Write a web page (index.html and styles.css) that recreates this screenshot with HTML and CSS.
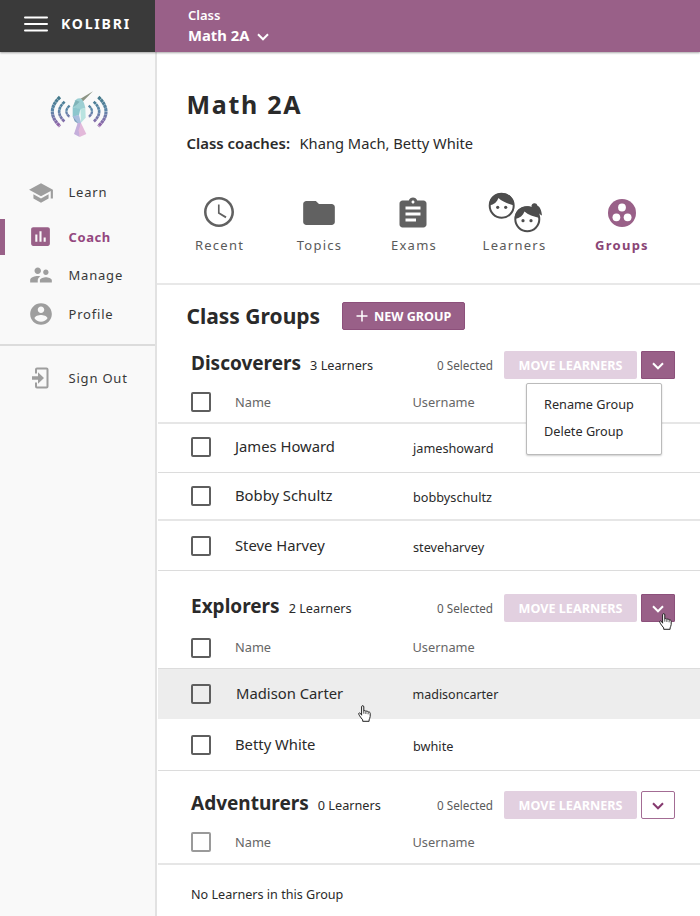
FILE: index.html
```html
<!DOCTYPE html>
<html lang="en">
<head>
<meta charset="utf-8">
<title>Kolibri – Math 2A</title>
<link rel="stylesheet" href="styles.css">
</head>
<body>
<svg class="defs" width="0" height="0" aria-hidden="true">
  <symbol id="hand" viewBox="0 0 13 17">
    <path d="M3.6 10.2V1.9C3.6.2 5.8.2 5.8 1.9V6C6.2 5.3 7.8 5.4 7.9 6.5 8.4 5.7 10 6 10.1 7.2 10.7 6.6 12.2 7 12.2 8.3V11.4C12.2 13 11.3 13.8 11.1 14.9V16.3H4.7V14.9C3.8 13.6 2.5 12.3 1.6 10.8.9 9.6.2 8.4 1.1 8 2.1 7.5 2.8 8.8 3.6 10.2Z" fill="#fff" stroke="#222" stroke-width="1" stroke-linejoin="round"/>
    <path d="M5.8 6V8.7M7.9 6.6V9M10.1 7.4V9.3" fill="none" stroke="#222" stroke-width=".8"/>
  </symbol>
  <symbol id="caret" viewBox="0 0 12 8"><path d="M1 1.3 6 6.3 11 1.3" fill="none" stroke="currentColor" stroke-width="2"/></symbol>
</svg>

<header class="topbar">
  <div class="brand">
    <svg class="menu" viewBox="0 0 24 16"><path d="M1 1.6H23M1 8H23M1 14.4H23" stroke="#fff" stroke-width="2" stroke-linecap="round"/></svg>
    <span>KOLIBRI</span>
  </div>
  <div class="class-picker">
    <div class="picker-label">Class</div>
    <div class="picker-value">Math 2A<svg class="picker-caret" viewBox="0 0 12 8"><use href="#caret"/></svg></div>
  </div>
</header>

<div class="layout">
  <nav class="sidebar">
    <svg class="logo" viewBox="0 0 210 180">
      <defs>
        <linearGradient id="wave" x1="0" y1="37" x2="0" y2="124" gradientUnits="userSpaceOnUse">
          <stop offset="0" stop-color="#44798a"/><stop offset=".45" stop-color="#5b86a8"/><stop offset="1" stop-color="#9563aa"/>
        </linearGradient>
      </defs>
      <g fill="none" stroke="url(#wave)" stroke-dasharray="9 1">
        <path stroke-width="9.5" d="M45 36Q-1 80 45 124M160 36Q206 80 160 124"/>
        <path stroke-width="8" d="M59 50Q26 80 59 110M146 50Q179 80 146 110"/>
        <path stroke-width="7" d="M74 62Q54 79 74 96M131 62Q151 79 131 96"/>
      </g>
      <path fill="#8c9484" d="M144 19 104 43 112 51Z"/>
      <path fill="#9ccfd3" d="M91 46Q100 36 111 43L117 54 121 68 106 74 83 66Z"/>
      <path fill="#7fb3b8" d="M92 46 84 66 94 60 104 50Z"/>
      <path fill="#b9e3e0" d="M106 72 121 68 122 98 108 113Z"/>
      <path fill="#8cc6cd" d="M83 66 106 72 102 91 83 95Z"/>
      <path fill="#a9bede" d="M83 94 102 90 108 113 100 117Z"/>
      <path fill="#789cba" d="M83 93 101 117 89 109Z"/>
      <path fill="#c5afdb" d="M98 114 108 114 104 156 87 147Z"/>
      <path fill="#e3b9da" d="M108 114 124 147 104 156 101 136Z"/>
    </svg>
    <a class="nav-item nav-learn"><svg viewBox="0 0 24 24"><path d="M5 13.18v4L12 21l7-3.82v-4L12 17l-7-3.82zM12 3 1 9l11 6 9-4.91V17h2V9L12 3z"/></svg><span>Learn</span></a>
    <a class="nav-item nav-coach"><svg viewBox="0 0 24 24"><path d="M19 3H5c-1.100 0-2 .9-2 2v14c0 1.100.9 2 2 2h14c1.100 0 2-.9 2-2V5c0-1.100-.9-2-2-2zM9 17H7v-7h2v7zm4 0h-2V7h2v10zm4 0h-2v-4h2v4z"/></svg><span>Coach</span></a>
    <a class="nav-item nav-manage"><svg viewBox="0 0 24 24"><path d="M16.500 12c1.380 0 2.490-1.120 2.490-2.500S17.880 7 16.500 7C15.120 7 14 8.120 14 9.500s1.120 2.500 2.500 2.500zM9 11c1.660 0 2.990-1.340 2.990-3S10.660 5 9 5C7.340 5 6 6.340 6 8s1.340 3 3 3zm7.500 3c-1.830 0-5.500.92-5.500 2.750V19h11v-2.250c0-1.830-3.670-2.750-5.500-2.750zM9 13c-2.330 0-7 1.170-7 3.500V19h7v-2.250c0-.85.33-2.340 2.370-3.470C10.500 13.100 9.660 13 9 13z"/></svg><span>Manage</span></a>
    <a class="nav-item nav-profile"><svg viewBox="0 0 24 24"><path d="M12 2C6.480 2 2 6.480 2 12s4.480 10 10 10 10-4.480 10-10S17.520 2 12 2zm0 3c1.660 0 3 1.340 3 3s-1.340 3-3 3-3-1.340-3-3 1.340-3 3-3zm0 14.200c-2.500 0-4.710-1.280-6-3.220.03-1.990 4-3.080 6-3.080 1.990 0 5.970 1.090 6 3.080-1.290 1.940-3.500 3.220-6 3.220z"/></svg><span>Profile</span></a>
    <a class="nav-item nav-signout"><svg viewBox="0 0 26 26"><path d="M8 8.500V4.500Q8 3.500 9 3.500H18.500Q19.500 3.500 19.500 4.500V21.500Q19.500 22.500 18.500 22.500H9Q8 22.500 8 21.500V17.500" fill="none" stroke="#9e9e9e" stroke-width="2"/><path d="M4 11.300H10V7.300L16 13 10 18.700V14.700H4Z"/></svg><span>Sign Out</span></a>
  </nav>

  <main class="main">
    <section class="hero">
      <h1>Math 2A</h1>
      <p class="coaches"><b>Class coaches:</b><span>Khang Mach, Betty White</span></p>
      <div class="tabs">
        <a class="tab"><span class="tab-icon"><svg width="36" height="36" viewBox="0 0 24 24"><path d="M11.990 2C6.470 2 2 6.480 2 12s4.470 10 9.990 10C17.520 22 22 17.520 22 12S17.520 2 11.990 2zM12 20.300c-4.600 0-8.300-3.700-8.300-8.300S7.400 3.700 12 3.700s8.300 3.700 8.300 8.300-3.700 8.300-8.300 8.300z"/><path d="M12.400 7H11.300v6l5.050 3.100.65-1.050-4.600-2.700z"/></svg></span>Recent</a>
        <a class="tab"><span class="tab-icon tab-folder"><svg width="38" height="36" viewBox="0 0 24 24" preserveAspectRatio="none"><path d="M10 4H4c-1.100 0-1.990.9-1.990 2L2 18c0 1.100.9 2 2 2h16c1.100 0 2-.9 2-2V8c0-1.100-.9-2-2-2h-8l-2-2z"/></svg></span>Topics</a>
        <a class="tab"><span class="tab-icon tab-exams"><svg width="36" height="36" viewBox="0 0 24 24"><path d="M19 3h-4.180C14.400 1.840 13.300 1 12 1c-1.300 0-2.400.84-2.820 2H5c-1.100 0-2 .9-2 2v14c0 1.100.9 2 2 2h14c1.100 0 2-.9 2-2V5c0-1.100-.9-2-2-2zm-7 0c.55 0 1 .45 1 1s-.45 1-1 1-1-.45-1-1 .45-1 1-1zm2 14H7v-2h7v2zm3-4H7v-2h10v2zm0-4H7V7h10v2z"/></svg></span>Exams</a>
        <a class="tab"><span class="tab-icon"><svg width="56" height="42" viewBox="0 0 56 42">
          <g fill="#fff" stroke="#4d4d4d" stroke-width="2"><circle cx="15.700" cy="14.700" r="12"/><circle cx="41.300" cy="28.300" r="12"/></g>
          <g fill="#4d4d4d"><path d="M3.500 14.500C3 7 8 2 15.700 2 23 2 28.400 7.500 28 14.500 22 12.500 16 10.500 12.500 7 11 11 8 13.500 3.500 14.500Z"/>
          <path d="M29 28C28.500 20 34 15.300 41 15.300 43 15.300 44 15.600 45.500 16 45 13.500 47 12 48.600 12.200 50 12.300 51 13 51.300 14.500 54.500 16 55.500 20 56 24.500 54.500 23.800 53.800 23 53.200 22.500L53.500 27C47.500 25.500 42 24 38.500 20.500 37 24.500 34 27 29 28Z"/>
          <circle cx="11.700" cy="16.300" r="1.600"/><circle cx="19.700" cy="16.300" r="1.600"/><circle cx="37" cy="29.700" r="1.600"/><circle cx="45" cy="29.700" r="1.600"/></g></svg></span>Learners</a>
        <a class="tab tab-active"><span class="tab-icon tab-groups"><svg width="28" height="28" viewBox="0 0 28 28"><circle cx="14" cy="14" r="14"/><g fill="#fff"><circle cx="14" cy="8.500" r="3.900"/><circle cx="8.400" cy="18.300" r="3.900"/><circle cx="19.600" cy="18.300" r="3.900"/></g></svg></span>Groups</a>
      </div>
    </section>

    <div class="groups-title">
      <h2>Class Groups</h2>
      <button class="btn btn-new"><svg viewBox="0 0 12 12"><path d="M6 .5V11.500M.5 6H11.500" stroke="#fff" stroke-width="1.500"/></svg>NEW GROUP</button>
    </div>

    <section class="group">
      <div class="group-head">
        <div class="group-name"><h3>Discoverers</h3><span>3 Learners</span></div>
        <span class="selected">0 Selected</span>
        <button class="btn btn-move">MOVE LEARNERS</button>
        <div class="options">
          <button class="btn btn-caret"><svg viewBox="0 0 12 8"><use href="#caret"/></svg></button>
          <div class="dropdown"><a>Rename Group</a><a>Delete Group</a></div>
        </div>
      </div>
      <div class="row row-head line-2 h-42"><i class="check"></i><span>Name</span><span>Username</span></div>
      <div class="row row-first"><i class="check"></i><span class="name">James Howard</span><span class="user user-low">jameshoward</span></div>
      <div class="row line-2 h-48"><i class="check"></i><span class="name">Bobby Schultz</span><span class="user user-low">bobbyschultz</span></div>
      <div class="row h-50"><i class="check"></i><span class="name">Steve Harvey</span><span class="user user-low">steveharvey</span></div>
    </section>

    <section class="group group-explorers">
      <div class="group-head">
        <div class="group-name"><h3>Explorers</h3><span>2 Learners</span></div>
        <span class="selected">0 Selected</span>
        <button class="btn btn-move">MOVE LEARNERS</button>
        <div class="options">
          <button class="btn btn-caret"><svg viewBox="0 0 12 8"><use href="#caret"/></svg></button>
          <svg class="cursor cursor-button"><use href="#hand"/></svg>
        </div>
      </div>
      <div class="row row-head h-44"><i class="check"></i><span>Name</span><span>Username</span></div>
      <div class="row row-hover"><i class="check"></i><span class="name">Madison Carter</span><span class="user">madisoncarter</span><svg class="cursor cursor-row"><use href="#hand"/></svg></div>
      <div class="row h-52"><i class="check"></i><span class="name">Betty White</span><span class="user user-low">bwhite</span></div>
    </section>

    <section class="group group-adventurers">
      <div class="group-head">
        <div class="group-name"><h3>Adventurers</h3><span>0 Learners</span></div>
        <span class="selected">0 Selected</span>
        <button class="btn btn-move">MOVE LEARNERS</button>
        <div class="options"><button class="btn btn-caret btn-outline"><svg viewBox="0 0 12 8"><use href="#caret"/></svg></button></div>
      </div>
      <div class="row row-head line-2 h-43"><i class="check check-disabled"></i><span>Name</span><span>Username</span></div>
      <p class="empty">No Learners in this Group</p>
    </section>
  </main>
</div>
</body>
</html>
```
FILE: styles.css
```css
:root {
  --purple: #996088;
}

* { box-sizing: border-box; }

body {
  margin: 0;
  height: 916px;
  overflow: hidden;
  background: #fff;
  color: #2a2a2a;
  font-family: "Noto Sans", sans-serif;
  font-size: 13px;
}

h1, h2, h3, p { margin: 0; }
svg { display: block; flex: none; }
.defs { position: absolute; }

/* Top bar */
.topbar {
  position: relative;
  z-index: 1;
  display: flex;
  height: 52px;
  color: #fff;
  box-shadow: 0 1px 2px rgba(0, 0, 0, .35);
}
.brand {
  display: flex;
  align-items: center;
  width: 155px;
  padding: 0 0 4px 24px;
  background: #3a3a3a;
  font-size: 14px;
  font-weight: 700;
  letter-spacing: 1.8px;
}
.brand span { padding-bottom: 1px; }
.menu { width: 24px; height: 16px; margin-right: 13px; }
.class-picker {
  flex: 1;
  padding: 5px 0 0 33px;
  background: var(--purple);
}
.picker-label { font-weight: 600; line-height: 20px; }
.picker-value {
  display: flex;
  align-items: center;
  font-size: 14.800px;
  font-weight: 700;
  line-height: 21px;
}
.picker-caret { width: 12px; height: 8px; margin: 3px 0 0 8px; }

/* Sidebar */
.layout { display: flex; height: 864px; }
.sidebar {
  width: 157px;
  background: #f9f9f9;
  border-right: 2px solid #e2e2e2;
}
.logo { width: 70px; height: 60px; margin: 33px 0 27px 45px; }
.nav-item {
  display: flex;
  align-items: center;
  height: 40px;
  padding-left: 28px;
  letter-spacing: .8px;
  color: #383838;
}
.nav-item span { padding-bottom: 1px; }
.nav-item svg { width: 26px; height: 26px; margin-right: 14.500px; fill: #9e9e9e; }
.nav-learn { height: 41px; }
.nav-coach {
  height: 36px;
  margin-top: 6px;
  padding-left: 23px;
  border-left: 5px solid var(--purple);
  color: #94477f;
  font-weight: 700;
  letter-spacing: .6px;
}
.nav-coach svg { width: 25px; height: 25px; margin: 0 15.500px 2px 0; fill: var(--purple); }
.nav-profile { height: 39px; }
.nav-profile svg { margin-bottom: 1px; }
.nav-signout {
  height: 66px;
  margin-top: 10px;
  border-top: 2px solid #dcdcdc;
}

/* Class header */
.main { flex: 1; padding-left: 1px; }
.hero {
  height: 233px;
  margin-left: -1px;
  padding: 33px 0 0 29.500px;
  border-bottom: 2px solid #e8e8e8;
}
h1 {
  font-size: 25px;
  font-weight: 700;
  letter-spacing: 1.700px;
  line-height: 38px;
}
.coaches {
  display: flex;
  gap: 9.500px;
  padding-top: 9px;
  font-size: 14.700px;
  line-height: 23px;
}
.coaches b { font-size: 14.900px; font-weight: 600; }
.tabs {
  display: grid;
  grid-template-columns: 100px 100px 89px 112px 103px;
  margin: 36px 0 0 -17.500px;
}
.tab {
  display: flex;
  flex-direction: column;
  align-items: center;
  padding-left: 1px;
  color: #5a5a5a;
  letter-spacing: 1.250px;
  line-height: 21px;
}
.tab-icon {
  display: flex;
  align-items: center;
  justify-content: center;
  height: 42px;
  margin: 0 1px 2px 0;
}
.tab svg { fill: #616161; }
.tab-folder { padding-top: 2px; margin-right: 2px; }
.tab-exams { padding-top: 3px; margin-right: 2px; }
.tab-groups { padding-top: 2px; }
.tab-active { color: #8a4576; font-weight: 700; }
.tab-active svg { fill: var(--purple); }

/* Buttons */
.btn {
  display: flex;
  align-items: center;
  justify-content: center;
  height: 28px;
  padding: 0;
  border: 0;
  border-radius: 2px;
  background: var(--purple);
  color: #fff;
  font: 700 12.600px "Noto Sans", sans-serif;
}
.btn-new { width: 123px; margin-left: 22px; border: 1px solid #8c507b; }
.btn-new svg { width: 12px; height: 12px; margin-right: 6px; }
.btn-move { width: 133px; margin-right: 4px; background: #e2d0e0; }
.btn-caret { width: 34px; border: 1px solid #8c507b; border-radius: 1px; }
.btn-caret svg { width: 12px; height: 8px; margin: 2px 1px 0 0; }
.btn-outline { background: #fff; border-color: #a36c94; color: #86396f; border-radius: 2px; }

/* Groups */
.groups-title {
  display: flex;
  align-items: center;
  height: 62px;
  margin-bottom: 1px;
  padding-left: 28.500px;
}
h2 { padding-bottom: 1px; font-size: 21px; font-weight: 700; line-height: 28px; }
.group-explorers { padding-top: 20px; }
.group-adventurers { padding-top: 17px; }
.group-head {
  display: flex;
  align-items: center;
  height: 34px;
  padding: 0 25px 0 33px;
}
.group-name {
  display: flex;
  flex: 1;
  align-items: baseline;
  gap: 9px;
  padding-bottom: 5px;
  font-size: 12.700px;
}
h3 { font-size: 19px; font-weight: 700; line-height: 26px; }
.selected { margin-right: 11px; color: #5a5a5a; font-size: 11.700px; }
.options { position: relative; }
.dropdown {
  position: absolute;
  z-index: 2;
  top: 32px;
  right: 13px;
  width: 136px;
  height: 72px;
  padding: 7px 0 0 17px;
  border: 1px solid #bbb;
  border-radius: 2px;
  background: #fff;
  box-shadow: 0 1px 2px rgba(0, 0, 0, .2);
  font-size: 12.700px;
}
.dropdown a { display: block; line-height: 27px; }

.row {
  position: relative;
  display: grid;
  grid-template-columns: 44px 177.500px 1fr;
  align-items: center;
  height: 49px;
  padding-left: 33px;
  border-bottom: 1px solid #dcdcdc;
}
.line-2 { border-bottom: 2px solid #e6e6e6; }
.h-42 { height: 42px; }
.h-43 { height: 43px; padding-bottom: 1px; }
.h-44 { height: 44px; padding-top: 2px; }
.h-48 { height: 48px; }
.h-50 { height: 50px; }
.h-52 { height: 52px; }
.row-head { color: #666; font-size: 12.800px; }
.h-44 span, .h-43 span { padding-bottom: 1px; }
.row-first { padding-bottom: 3px; }
.row-hover { height: 50px; background: #ededed; border-bottom-color: #ededed; }
.name { padding-bottom: 2px; font-size: 14.800px; }
.row-hover .name { padding-left: 1px; }
.user { padding: 1px 0 0 .5px; font-size: 12.700px; }
.user-low { padding-top: 2px; }
.row-hover .user { padding-left: 0; font-size: 12.500px; }
.check {
  width: 20px;
  height: 20px;
  border: 2px solid #5e5e5e;
  border-radius: 2px;
}
.check-disabled { border-color: #9a9a9a; }
.empty { padding-left: 33px; font-size: 12.600px; line-height: 59px; }

/* Pointer overlays */
.cursor { position: absolute; z-index: 3; width: 13px; height: 17px; }
.cursor-row { left: 200px; top: 36px; }
.cursor-button { left: 18px; top: 19px; }
```
